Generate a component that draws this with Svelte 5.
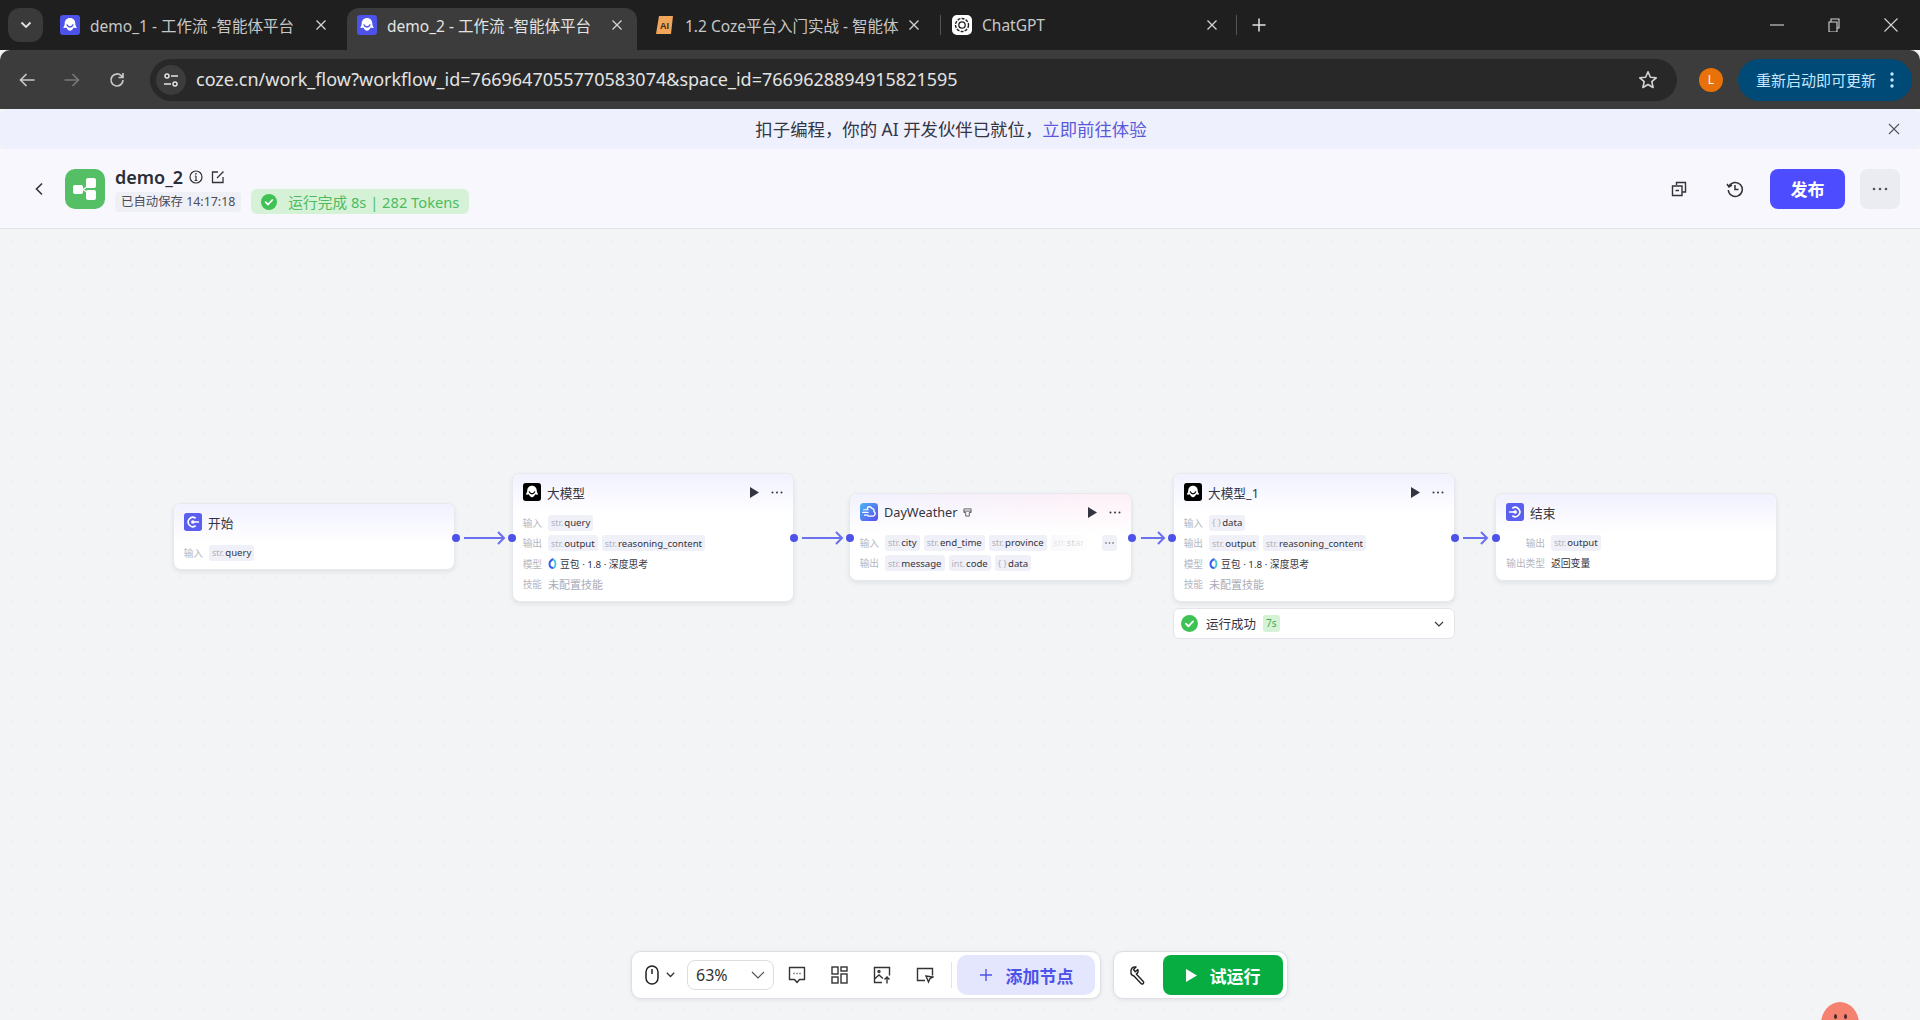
<script>
  const tabs = [
    { id: 'demo1', title: 'demo_1 - 工作流 -智能体平台', icon: 'coze', width: 297 },
    { id: 'demo2', title: 'demo_2 - 工作流 -智能体平台', icon: 'coze', width: 290, active: true },
    { id: 'course', title: '1.2 Coze平台入门实战 - 智能体', icon: 'ai', width: 303 },
    { id: 'chat', title: 'ChatGPT', icon: 'gpt', width: 295 }
  ];

  const STR = 'str.';
  const OBJ = '{ }';

  // canvas coordinates, measured from the top of the canvas
  const nodes = [
    {
      id: 'start', title: '开始', icon: 'start', left: 173, top: 274, width: 282, head: 'lilac',
      rows: [{ label: '输入', tags: [[STR, 'query']] }]
    },
    {
      id: 'llm', title: '大模型', icon: 'bot', left: 512, top: 244, width: 282, head: 'lilac', actions: true,
      rows: [
        { label: '输入', tags: [[STR, 'query']] },
        { label: '输出', tags: [[STR, 'output'], [STR, 'reasoning_content']] },
        { label: '模型', model: '豆包 · 1.8 · 深度思考' },
        { label: '技能', muted: '未配置技能' }
      ]
    },
    {
      id: 'weather', title: 'DayWeather', icon: 'weather', left: 849, top: 264, width: 283, head: 'pink', actions: true, plugin: true,
      rows: [
        { label: '输入', tags: [[STR, 'city'], [STR, 'end_time'], [STR, 'province']], fade: [STR, 'star'], more: true },
        { label: '输出', tags: [[STR, 'message'], ['int.', 'code'], [OBJ, 'data']] }
      ]
    },
    {
      id: 'llm1', title: '大模型_1', icon: 'bot', left: 1173, top: 244, width: 282, head: 'lilac', actions: true,
      rows: [
        { label: '输入', tags: [[OBJ, 'data']] },
        { label: '输出', tags: [[STR, 'output'], [STR, 'reasoning_content']] },
        { label: '模型', model: '豆包 · 1.8 · 深度思考' },
        { label: '技能', muted: '未配置技能' }
      ]
    },
    {
      id: 'end', title: '结束', icon: 'end', left: 1495, top: 264, width: 282, head: 'lilac', wide: true,
      rows: [
        { label: '输出', tags: [[STR, 'output']] },
        { label: '输出类型', plain: '返回变量' }
      ]
    }
  ];

  const ports = [456, 512, 794, 850, 1132, 1172, 1455, 1496];
  const arrows = [
    { x: 464, w: 41 },
    { x: 802, w: 41 },
    { x: 1141, w: 24 },
    { x: 1463, w: 25 }
  ];
  const PORT_Y = 309;
</script>

{#snippet check(size)}
  <svg width={size} height={size} viewBox="0 0 16 16">
    <circle cx="8" cy="8" r="8" fill="#3ec254" />
    <path d="M4.6 8.2l2.4 2.4 4.3-4.6" fill="none" stroke="#fff" stroke-width="1.7" stroke-linecap="round" stroke-linejoin="round" />
  </svg>
{/snippet}

{#snippet botFace(bg)}
  <path d="M10 3c-3.300 0-5.300 2.500-5.300 5.400 0 1.400-.5 3-1.700 4.100 1 .6 2.300.5 3.300.1.800 1.700 2.200 3.200 3.700 3.200s2.900-1.500 3.700-3.200c1 .4 2.300.5 3.300-.1-1.200-1.100-1.700-2.700-1.700-4.100C15.300 5.500 13.300 3 10 3z" fill="#fff" />
  <path d="M7 9.800c.6 1.500 1.700 2.200 3 2.200s2.400-.7 3-2.200" fill="none" stroke={bg} stroke-width="1.300" stroke-linecap="round" />
{/snippet}

{#snippet tabIcon(kind)}
  {#if kind === 'coze'}
    <svg width="20" height="20" viewBox="0 0 20 20">
      <rect width="20" height="20" rx="3" fill="#4d53e8" />
      {@render botFace('#4d53e8')}
    </svg>
  {:else if kind === 'ai'}
    <svg width="20" height="20" viewBox="0 0 20 20">
      <path d="M4 1h14l-2 18H1z" fill="#f2a65a" />
      <text x="9.500" y="14" font-size="9" font-weight="700" text-anchor="middle" fill="#3a2a15" font-family="Liberation Sans">AI</text>
    </svg>
  {:else}
    <svg width="20" height="20" viewBox="0 0 20 20">
      <rect width="20" height="20" rx="5" fill="#fff" />
      <circle cx="10" cy="10" r="6.500" fill="none" stroke="#222" stroke-width="1.400" stroke-dasharray="3 1.200" />
      <circle cx="10" cy="10" r="3.200" fill="none" stroke="#222" stroke-width="1.300" />
    </svg>
  {/if}
{/snippet}

{#snippet nodeIcon(kind)}
  <svg class="node-icon" width="18" height="18" viewBox="0 0 20 20">
    {#if kind === 'bot'}
      <rect width="20" height="20" rx="3" fill="#000" />
      {@render botFace('#000')}
    {:else if kind === 'start'}
      <rect width="20" height="20" rx="3" fill="#5b5fef" />
      <path d="M12.500 5.500a5.200 5.200 0 1 0 0 9" fill="none" stroke="#fff" stroke-width="1.800" stroke-linecap="round" />
      <circle cx="9.800" cy="10" r="2" fill="#fff" />
      <path d="M10 10h6" stroke="#fff" stroke-width="1.800" stroke-linecap="round" />
    {:else if kind === 'end'}
      <rect width="20" height="20" rx="3" fill="#5b5fef" />
      <path d="M7.500 5.500a5.200 5.200 0 1 1 0 9" fill="none" stroke="#fff" stroke-width="1.800" stroke-linecap="round" />
      <circle cx="10.200" cy="10" r="2" fill="#fff" />
      <path d="M4 10h6" stroke="#fff" stroke-width="1.800" stroke-linecap="round" />
    {:else}
      <defs>
        <linearGradient id="sky" x1="0" y1="0" x2="1" y2="1">
          <stop offset="0" stop-color="#4ab4f5" />
          <stop offset="1" stop-color="#5a4df0" />
        </linearGradient>
      </defs>
      <rect width="20" height="20" rx="4" fill="url(#sky)" />
      <path d="M4 7.500h5M3 10.500h6M5 13.500h4" stroke="#fff" stroke-width="1.300" stroke-linecap="round" />
      <path d="M8 6.500a2.500 2.500 0 0 1 4.800-.8 3 3 0 0 1 2.700 3.800 2.700 2.700 0 0 1-1.500 5H9" fill="none" stroke="#fff" stroke-width="1.500" stroke-linecap="round" />
    {/if}
  </svg>
{/snippet}

{#snippet tag(t)}
  <span class="tag"><i>{t[0]}</i>{t[1]}</span>
{/snippet}

<div class="page">
  <div class="tabstrip">
    <button class="tab-menu" aria-label="tabs">
      <svg width="12" height="8" viewBox="0 0 12 8"><path d="M1.500 1.500L6 6l4.500-4.500" fill="none" stroke="#e3e3e3" stroke-width="1.800" /></svg>
    </button>
    <div class="tabs">
      {#each tabs as t (t.id)}
        <div class="tab tab-{t.id}" class:active={t.active} style="width: {t.width}px">
          <span class="tab-icon">{@render tabIcon(t.icon)}</span>
          <span class="tab-title">{t.title}</span>
          <svg class="tab-x" width="12" height="12" viewBox="0 0 12 12"><path d="M1.500 1.500l9 9m0-9l-9 9" stroke="#d5d5d5" stroke-width="1.300" /></svg>
        </div>
        {#if t.id === 'course'}<span class="tab-sep"></span>{/if}
      {/each}
      <span class="tab-sep"></span>
      <svg class="tab-plus" width="16" height="16" viewBox="0 0 16 16"><path d="M8 1.500v13M1.500 8h13" stroke="#e3e3e3" stroke-width="1.500" /></svg>
    </div>
    <div class="win-controls">
      <svg width="14" height="14" viewBox="0 0 14 14"><path d="M0 7h14" stroke="#d5d5d5" stroke-width="1.100" /></svg>
      <svg width="14" height="14" viewBox="0 0 14 14"><path d="M2 4h8v10H2zM4 4V1h8v9h-2" fill="none" stroke="#d5d5d5" stroke-width="1.100" /></svg>
      <svg width="14" height="14" viewBox="0 0 14 14"><path d="M.5.5l13 13m0-13l-13 13" stroke="#d5d5d5" stroke-width="1.100" /></svg>
    </div>
  </div>

  <div class="toolbar">
    <div class="nav">
      <svg width="18" height="18" viewBox="0 0 18 18"><path d="M16.500 9H2.500M8.500 3l-6 6 6 6" fill="none" stroke="#c7c7c7" stroke-width="1.700" /></svg>
      <svg width="18" height="18" viewBox="0 0 18 18"><path d="M1.500 9h14M9.500 3l6 6-6 6" fill="none" stroke="#777" stroke-width="1.700" /></svg>
      <svg width="18" height="18" viewBox="0 0 18 18"><path d="M15 9a6 6 0 1 1-1.800-4.300L15 6.500M15 2v4.500h-4.500" fill="none" stroke="#c7c7c7" stroke-width="1.700" /></svg>
    </div>
    <div class="address">
      <span class="site-btn">
        <svg width="18" height="18" viewBox="0 0 18 18">
          <circle cx="5" cy="5" r="2" fill="none" stroke="#e3e3e3" stroke-width="1.500" />
          <path d="M9 5h7M2 13h7" stroke="#e3e3e3" stroke-width="1.500" />
          <circle cx="13" cy="13" r="2" fill="none" stroke="#e3e3e3" stroke-width="1.500" />
        </svg>
      </span>
      <span class="url">coze.cn/work_flow?workflow_id=7669647055770583074&amp;space_id=7669628894915821595</span>
      <svg width="20" height="20" viewBox="0 0 20 20"><path d="M10 1.800l2.400 5.400 5.800.6-4.400 3.900 1.300 5.800-5.100-3-5.100 3 1.300-5.800L1.800 7.800l5.800-.6z" fill="none" stroke="#d5d5d5" stroke-width="1.600" stroke-linejoin="round" /></svg>
    </div>
    <span class="avatar">L</span>
    <div class="update">
      <span>重新启动即可更新</span>
      <svg width="4" height="16" viewBox="0 0 4 16"><circle cx="2" cy="2" r="1.700" fill="#c2e7ff" /><circle cx="2" cy="8" r="1.700" fill="#c2e7ff" /><circle cx="2" cy="14" r="1.700" fill="#c2e7ff" /></svg>
    </div>
  </div>

  <div class="banner">
    <span>扣子编程，你的 AI 开发伙伴已就位，<a href="#top">立即前往体验</a></span>
    <svg class="banner-x" width="12" height="12" viewBox="0 0 12 12"><path d="M1 1l10 10m0-10L1 11" stroke="#555" stroke-width="1.100" /></svg>
  </div>

  <header class="head">
    <svg class="back" width="10" height="14" viewBox="0 0 10 14"><path d="M8 1.500L2.500 7 8 12.500" fill="none" stroke="#333" stroke-width="1.600" /></svg>
    <span class="logo">
      <svg width="26" height="26" viewBox="0 0 26 26" fill="#fff">
        <rect x="1" y="9" width="10" height="9" rx="2" />
        <rect x="14" y="2" width="10" height="10" rx="2" />
        <rect x="14" y="14" width="10" height="10" rx="2" />
        <path d="M10 13.500l6-4v1.500l-4 2.500 4 2.500v1.500z" />
      </svg>
    </span>
    <div class="head-info">
      <div class="name-row">
        <span class="name">demo_2</span>
        <svg width="14" height="14" viewBox="0 0 14 14"><circle cx="7" cy="7" r="6" fill="none" stroke="#333" stroke-width="1.200" /><path d="M7 6v4.500M5.600 10.500h2.800M5.800 6H7" fill="none" stroke="#333" stroke-width="1.200" /><circle cx="7" cy="3.800" r=".9" fill="#333" /></svg>
        <svg class="edit" width="14" height="14" viewBox="0 0 14 14"><path d="M7 2H1.500v10.500H12V7M6 8l6.500-6.500" fill="none" stroke="#333" stroke-width="1.300" /></svg>
      </div>
      <div class="status-row">
        <span class="saved">已自动保存 14:17:18</span>
        <span class="status">{@render check(16)}<span>运行完成 8s | 282 Tokens</span></span>
      </div>
    </div>
    <div class="head-actions">
      <svg width="16" height="16" viewBox="0 0 16 16"><path d="M5.500 4V1.500h9v9.500H11M1.500 5h9.500v9.500H1.500zM4.500 9.500h3.500" fill="none" stroke="#333" stroke-width="1.400" /></svg>
      <svg class="history" width="18" height="18" viewBox="0 0 18 18"><path d="M3.200 6a7 7 0 1 1-.9 4M1 4l2 3 3-1.800M9 5v4.500h3.500" fill="none" stroke="#333" stroke-width="1.500" /></svg>
      <button class="publish">发布</button>
      <button class="more" aria-label="more">
        <svg width="16" height="4" viewBox="0 0 16 4" fill="#555"><circle cx="2" cy="2" r="1.300" /><circle cx="8" cy="2" r="1.300" /><circle cx="14" cy="2" r="1.300" /></svg>
      </button>
    </div>
  </header>

  <main class="canvas">
    {#each arrows as a}
      <svg class="arrow" style="left: {a.x}px; top: {PORT_Y - 7}px; width: {a.w}px" height="14" viewBox="0 0 {a.w} 14">
        <path d="M0 7H{a.w - 1}M{a.w - 7} 1l6 6-6 6" fill="none" stroke="#6b70ef" stroke-width="2" />
      </svg>
    {/each}

    {#each nodes as n (n.id)}
      <section class="node {n.head}" class:wide={n.wide} style="left: {n.left}px; top: {n.top}px; width: {n.width}px">
        <div class="node-head">
          {@render nodeIcon(n.icon)}
          <span class="node-title">{n.title}</span>
          {#if n.plugin}
            <svg class="plugin" width="9" height="9" viewBox="0 0 10 10"><path d="M1 1h8v4H7v4H3V5H1zM1 3.500h8" fill="none" stroke="#555" stroke-width="1" /></svg>
          {/if}
          {#if n.actions}
            <span class="node-actions">
              <svg width="9" height="11" viewBox="0 0 9 11"><path d="M0 0l9 5.500L0 11z" fill="#33343f" /></svg>
              <svg width="12" height="3" viewBox="0 0 12 3" fill="#33343f"><circle cx="1.500" cy="1.500" r="1" /><circle cx="6" cy="1.500" r="1" /><circle cx="10.500" cy="1.500" r="1" /></svg>
            </span>
          {/if}
        </div>
        <div class="node-body">
          {#each n.rows as r}
            <div class="row">
              <span class="label">{r.label}</span>
              {#if r.tags}
                {#each r.tags as t}{@render tag(t)}{/each}
              {/if}
              {#if r.fade}
                <span class="fade">{@render tag(r.fade)}</span>
              {/if}
              {#if r.more}
                <span class="row-more">
                  <svg width="9" height="2" viewBox="0 0 9 2" fill="#555"><circle cx="1" cy="1" r=".8" /><circle cx="4.500" cy="1" r=".8" /><circle cx="8" cy="1" r=".8" /></svg>
                </span>
              {/if}
              {#if r.model}
                <svg class="model" width="9" height="11" viewBox="0 0 9 11">
                  <path d="M5.500 1C3 2 1.500 3.500 1.500 6s1.500 4 4 4" fill="none" stroke="#3a5cf0" stroke-width="2" />
                  <path d="M5.500 1.500c1.500 1 2 2.500 2 4.500s-.5 3-2 4" fill="none" stroke="#3fc6d8" stroke-width="1.800" />
                </svg>
                <span class="plain">{r.model}</span>
              {/if}
              {#if r.muted}<span class="muted">{r.muted}</span>{/if}
              {#if r.plain}<span class="plain">{r.plain}</span>{/if}
            </div>
          {/each}
        </div>
      </section>
    {/each}

    <div class="result">
      {@render check(17)}
      <span class="result-text">运行成功</span>
      <span class="result-time">7s</span>
      <svg class="result-open" width="10" height="6" viewBox="0 0 10 6"><path d="M1 1l4 4 4-4" fill="none" stroke="#333" stroke-width="1.100" /></svg>
    </div>

    {#each ports as x}
      <span class="port" style="left: {x - 4}px; top: {PORT_Y - 4}px"></span>
    {/each}

    <div class="dock">
      <div class="dock-group tools">
        <svg width="14" height="20" viewBox="0 0 14 20"><rect x="1" y="1" width="12" height="18" rx="6" fill="none" stroke="#222" stroke-width="1.500" /><path d="M7 4v5" stroke="#222" stroke-width="1.500" /></svg>
        <svg class="mouse-open" width="9" height="6" viewBox="0 0 9 6"><path d="M.8.800l3.700 3.700L8.200.800" fill="none" stroke="#333" stroke-width="1.300" /></svg>
        <div class="zoom">
          <span>63%</span>
          <svg width="14" height="8" viewBox="0 0 14 8"><path d="M1 1l6 6 6-6" fill="none" stroke="#555" stroke-width="1.200" /></svg>
        </div>
        <div class="dock-icons">
          <svg width="18" height="18" viewBox="0 0 18 18"><path d="M1.500 1.500h15v12h-5L9 16.500 6.500 13.500h-5z" fill="none" stroke="#333" stroke-width="1.400" stroke-linejoin="round" /><path d="M5.500 7.500h1m2 0h1m2 0h1" stroke="#333" stroke-width="1.500" /></svg>
          <svg width="17" height="18" viewBox="0 0 17 18" fill="none" stroke="#333" stroke-width="1.400"><rect x="1" y="1" width="6" height="7" /><rect x="10" y="1" width="6" height="4" /><rect x="1" y="11" width="6" height="6" /><rect x="10" y="8" width="6" height="9" /></svg>
          <svg width="18" height="18" viewBox="0 0 18 18" fill="none" stroke="#333" stroke-width="1.400"><path d="M9 16.500H1.500v-15h15v8" /><path d="M1.500 13l4.500-4 4 3.500" /><circle cx="6" cy="5.500" r="1" /><path d="M14 17.500v-6M11.500 13.500l2.500-2.500 2.500 2.500" /></svg>
          <svg width="18" height="18" viewBox="0 0 18 18" fill="none" stroke="#333" stroke-width="1.400"><path d="M9 14.500H1.500v-12h15v7" /><path d="M10 10l7 1-3 1.500-1.500 3.500z" /></svg>
        </div>
        <span class="dock-sep"></span>
        <button class="add">
          <svg width="14" height="14" viewBox="0 0 14 14"><path d="M7 1v12M1 7h12" stroke="#4d53e8" stroke-width="1.400" /></svg>
          <span>添加节点</span>
        </button>
      </div>
      <div class="dock-group runs">
        <svg width="18" height="20" viewBox="0 0 18 20"><path d="M2 6.500a4 4 0 0 1 5-4.500L4.500 4.500l1.800 2.200 2.500-2.300a4 4 0 0 1-1.500 4.700l7 7.400a1.500 1.500 0 0 1-2.300 2L5 11a4 4 0 0 1-3-4.500z" fill="none" stroke="#222" stroke-width="1.400" stroke-linejoin="round" /></svg>
        <button class="run">
          <svg width="11" height="13" viewBox="0 0 11 13"><path d="M0 0l11 6.500L0 13z" fill="#fff" /></svg>
          <span>试运行</span>
        </button>
      </div>
    </div>

    <div class="mascot" aria-hidden="true">
      <span class="eye"></span><span class="eye"></span>
    </div>
  </main>
</div>

<style>
  :global(body) {
    margin: 0;
    background: #f2f4f5;
  }

  .page {
    display: flex;
    flex-direction: column;
    height: 100vh;
    overflow: hidden;
    font-family: "Noto Sans", "Noto Sans CJK SC", sans-serif;
    color: #1c1f23;
  }

  button {
    border: 0;
    padding: 0;
    font: inherit;
  }

  /* browser chrome */
  .tabstrip {
    display: flex;
    align-items: flex-end;
    height: 50px;
    flex: none;
    background: #1f1f1f;
    padding-left: 8px;
    box-sizing: border-box;
  }

  .tab-menu {
    display: flex;
    align-items: center;
    justify-content: center;
    width: 35px;
    height: 34px;
    margin-bottom: 8px;
    border-radius: 12px;
    background: #3a3a3a;
  }

  .tabs {
    display: flex;
    align-items: flex-end;
    flex: 1;
    margin-left: 7px;
  }

  .tab {
    display: flex;
    align-items: center;
    height: 42px;
    box-sizing: border-box;
    padding: 0 20px 8px 10px;
    border-radius: 12px 12px 0 0;
    color: #c7c7c7;
    font-size: 15.500px;
    flex: none;
  }

  .tab.active {
    padding-right: 14px;
    background: #3c3c3c;
    color: #e3e3e3;
  }

  .tab-course {
    padding-left: 18px;
  }

  .tab-chat {
    padding-left: 11px;
    padding-right: 18px;
  }

  .tab-icon {
    display: flex;
    margin-right: 10px;
  }

  .tab-title {
    flex: 1;
    min-width: 0;
    white-space: nowrap;
    overflow: hidden;
  }

  .tab-x {
    margin-left: 8px;
    flex: none;
  }

  .tab-sep {
    width: 1px;
    height: 20px;
    margin-bottom: 15px;
    background: #555;
    flex: none;
  }

  .tab-plus {
    margin: 0 0 17px 14px;
  }

  .win-controls {
    display: flex;
    align-items: center;
    gap: 43px;
    padding: 0 22px 18px 0;
  }

  .toolbar {
    display: flex;
    align-items: center;
    height: 59px;
    flex: none;
    background: #3c3c3c;
    border-radius: 10px 10px 0 0;
    box-sizing: border-box;
  }

  .nav {
    display: flex;
    align-items: center;
    gap: 27px;
    padding-left: 18px;
    width: 150px;
    box-sizing: border-box;
    flex: none;
  }

  .address {
    display: flex;
    align-items: center;
    width: 1527px;
    height: 42px;
    flex: none;
    border-radius: 21px;
    background: #282828;
    padding: 0 19px 0 6px;
    box-sizing: border-box;
  }

  .site-btn {
    display: flex;
    align-items: center;
    justify-content: center;
    width: 30px;
    height: 30px;
    border-radius: 50%;
    background: #3c3c3c;
  }

  .url {
    flex: 1;
    margin: -2px 0 0 10px;
    color: #e3e3e3;
    font-size: 18px;
    white-space: nowrap;
  }

  .avatar {
    width: 24px;
    height: 24px;
    margin-left: 22px;
    border-radius: 50%;
    background: #e8710a;
    color: #fff;
    font-size: 12px;
    line-height: 24px;
    text-align: center;
    flex: none;
  }

  .update {
    display: flex;
    align-items: center;
    justify-content: space-between;
    width: 174px;
    height: 42px;
    margin-left: 15px;
    padding: 0 18px 0 18px;
    box-sizing: border-box;
    border-radius: 21px;
    background: #004a77;
    color: #c2e7ff;
    font-size: 15px;
    white-space: nowrap;
    flex: none;
  }

  /* coze page */
  .banner {
    position: relative;
    display: flex;
    align-items: center;
    justify-content: center;
    height: 40px;
    flex: none;
    box-sizing: border-box;
    padding: 0 18px 2px 0;
    background: #eff0fe;
    border-radius: 8px;
    color: #333543;
    font-size: 17.400px;
  }

  .banner a {
    color: #5a5ad8;
    text-decoration: none;
  }

  .banner-x {
    position: absolute;
    right: 20px;
    top: 14px;
  }

  .head {
    display: flex;
    align-items: center;
    height: 80px;
    flex: none;
    box-sizing: border-box;
    padding: 0 20px 0 34px;
    background: #f7f7fd;
    border-bottom: 1px solid #e3e4e9;
  }

  .logo {
    display: flex;
    align-items: center;
    justify-content: center;
    width: 40px;
    height: 40px;
    margin-left: 21px;
    border-radius: 10px;
    background: #55bf66;
  }

  .head-info {
    display: flex;
    flex-direction: column;
    margin-left: 10px;
  }

  .name-row {
    display: flex;
    align-items: center;
    gap: 6px;
    height: 26px;
    padding-top: 1px;
    box-sizing: border-box;
  }

  .name {
    font-size: 18px;
    font-weight: 600;
    color: #2b2d36;
  }

  .edit {
    margin-left: 2px;
  }

  .status-row {
    display: flex;
    align-items: center;
    gap: 10px;
  }

  .saved {
    height: 20px;
    padding: 0 6px;
    border-radius: 4px;
    background: #eff0f6;
    color: #4a4d59;
    font-size: 12.400px;
    line-height: 20px;
    white-space: nowrap;
  }

  .status {
    display: flex;
    align-items: center;
    gap: 11px;
    height: 25px;
    padding: 0 10px;
    border-radius: 6px;
    background: #d5f2d7;
    color: #4cbb5f;
    font-size: 14.700px;
    white-space: nowrap;
  }

  .head-actions {
    display: flex;
    align-items: center;
    margin-left: auto;
  }

  .history {
    margin-left: 39px;
  }

  .publish {
    width: 75px;
    height: 40px;
    margin-left: 26px;
    border-radius: 8px;
    background: #4d4dff;
    color: #fff;
    font-size: 17px;
    font-weight: 700;
  }

  .more {
    display: flex;
    align-items: center;
    justify-content: center;
    width: 40px;
    height: 40px;
    margin-left: 15px;
    border-radius: 8px;
    background: #ebecf2;
  }

  .canvas {
    position: relative;
    flex: 1;
    overflow: hidden;
    background-color: #f2f4f5;
    background-image: radial-gradient(#eceef0 1px, transparent 1px);
    background-size: 24px 24px;
  }

  .arrow {
    position: absolute;
    overflow: visible;
  }

  .port {
    position: absolute;
    width: 8px;
    height: 8px;
    border-radius: 50%;
    background: #4d53e8;
  }

  .node {
    position: absolute;
    box-sizing: border-box;
    border-radius: 8px;
    background: #fff;
    border: 1px solid #e8e9ee;
    box-shadow: 0 2px 5px rgba(30, 35, 60, 0.08);
    padding-bottom: 8.500px;
  }

  .node-head {
    display: flex;
    align-items: center;
    height: 38.500px;
    box-sizing: border-box;
    padding: 0 10px 2px;
    border-radius: 8px 8px 0 0;
    background: linear-gradient(#f1f1ff, #fff);
  }

  .node.pink .node-head {
    background: linear-gradient(#fdf3fa00, #fff), linear-gradient(100deg, #f1f1ff, #fdeff7 85%);
  }

  .node-title {
    margin-left: 6px;
    font-size: 12.700px;
    color: #33343f;
    white-space: nowrap;
  }

  .plugin {
    margin-left: 5px;
  }

  .node-actions {
    display: flex;
    align-items: center;
    gap: 12px;
    margin-left: auto;
  }

  .node-body {
    display: flex;
    flex-direction: column;
    gap: 4.500px;
    padding: 2px 9px 0;
  }

  .row {
    display: flex;
    align-items: center;
    gap: 4px;
    height: 16px;
    font-size: 9.600px;
    white-space: nowrap;
  }

  .label {
    width: 20px;
    margin-right: 2px;
    color: #b4b7c2;
    font-size: 9.700px;
    flex: none;
    text-align: right;
  }

  .node.wide .label {
    width: 40px;
    margin-right: 2px;
  }

  .tag {
    display: inline-flex;
    align-items: center;
    height: 16px;
    padding: 0 3px;
    border-radius: 3px;
    background: #f0f0f8;
    color: #33343f;
  }

  .tag i {
    margin-right: 1px;
    color: #b0b3bf;
    font-size: 9px;
    font-style: normal;
  }

  .fade {
    display: flex;
    -webkit-mask-image: linear-gradient(90deg, rgba(0, 0, 0, 0.4), rgba(0, 0, 0, 0.1));
    mask-image: linear-gradient(90deg, rgba(0, 0, 0, 0.4), rgba(0, 0, 0, 0.1));
  }

  .row-more {
    display: flex;
    align-items: center;
    height: 16px;
    margin-left: auto;
    margin-right: 5px;
    padding: 0 3px;
    border-radius: 3px;
    background: #f0f0f8;
  }

  .model {
    margin-right: -1px;
  }

  .plain {
    color: #33343f;
    font-size: 9.800px;
  }

  .muted {
    color: #a9acb8;
    font-size: 11px;
  }

  .result {
    position: absolute;
    left: 1173px;
    top: 379px;
    width: 282px;
    height: 31px;
    box-sizing: border-box;
    display: flex;
    align-items: center;
    padding: 0 10px 0 7px;
    border-radius: 6px;
    border: 1px solid #e3e4e9;
    background: #fff;
  }

  .result-text {
    margin-left: 8px;
    font-size: 12.500px;
    color: #33343f;
  }

  .result-time {
    margin-left: 7px;
    padding: 0 3px;
    border-radius: 3px;
    background: #d5f2d7;
    color: #3fae52;
    font-size: 10px;
    line-height: 17px;
  }

  .result-open {
    margin-left: auto;
  }

  .dock {
    position: absolute;
    left: 631px;
    top: 722px;
    display: flex;
    gap: 12px;
  }

  .dock-group {
    display: flex;
    align-items: center;
    box-sizing: border-box;
    height: 48px;
    border-radius: 10px;
    background: #fff;
    border: 1px solid #dedfe5;
    box-shadow: 0 1px 4px rgba(30, 35, 60, 0.08);
  }

  .tools {
    width: 470px;
    padding-left: 13px;
  }

  .runs {
    width: 175px;
    padding-left: 15px;
  }

  .mouse-open {
    margin-left: 7px;
  }

  .zoom {
    display: flex;
    align-items: center;
    justify-content: space-between;
    width: 87px;
    height: 30px;
    box-sizing: border-box;
    margin-left: 12px;
    padding: 0 8px;
    border: 1px solid #dcdde3;
    border-radius: 8px;
    font-size: 16px;
    color: #333;
  }

  .dock-icons {
    display: flex;
    align-items: center;
    gap: 25px;
    margin-left: 14px;
  }

  .dock-sep {
    width: 1px;
    height: 26px;
    margin: 0 5px 0 17px;
    background: #e3e4e9;
  }

  .add {
    display: flex;
    align-items: center;
    justify-content: center;
    gap: 13px;
    width: 138px;
    height: 40px;
    border-radius: 10px;
    background: #e4e6fd;
    color: #4d53e8;
    font-size: 17px;
    font-weight: 700;
  }

  .run {
    display: flex;
    align-items: center;
    justify-content: center;
    gap: 13px;
    width: 120px;
    height: 40px;
    margin-left: 16px;
    border-radius: 8px;
    background: #08ad42;
    color: #fff;
    font-size: 17px;
    font-weight: 700;
  }

  .mascot {
    position: absolute;
    left: 1821px;
    top: 773px;
    width: 38px;
    height: 44px;
    display: flex;
    justify-content: center;
    gap: 7px;
    padding-top: 12px;
    box-sizing: border-box;
    border-radius: 50%;
    background: #f5826f;
  }

  .eye {
    width: 3px;
    height: 5px;
    border-radius: 50%;
    background: #4a2a28;
  }
</style>
